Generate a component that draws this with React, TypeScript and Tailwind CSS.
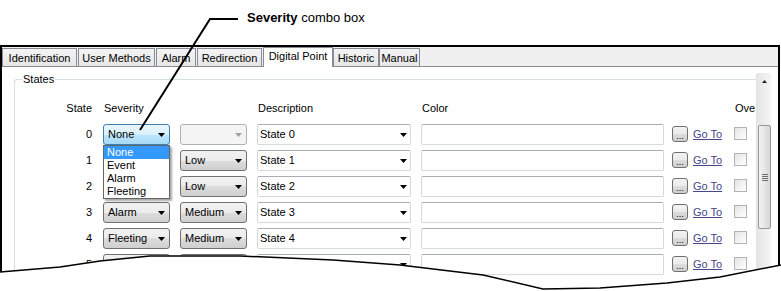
import React from "react";

type Kind = "normal" | "focus" | "disabled";

const tabs = [
  { label: "Identification", cls: "w-[75px]" },
  { label: "User Methods", cls: "ml-[1px] w-[77px]" },
  { label: "Alarm", cls: "ml-[1px] w-[40px]" },
  { label: "Redirection", cls: "ml-[1px] w-[65px]" },
  { label: "Digital Point", cls: "ml-[1px] w-[70px]", active: true },
  { label: "Historic", cls: "w-[46px]" },
  { label: "Manual", cls: "w-[41px]" },
];

// rows 1 and 2: severity hidden behind the open list
const rows = [
  { n: 0, sev: "None", sevKind: "focus" as Kind, lvl: "", lvlKind: "disabled" as Kind, desc: "State 0" },
  { n: 1, sev: "", sevKind: "normal" as Kind, lvl: "Low", lvlKind: "normal" as Kind, desc: "State 1" },
  { n: 2, sev: "", sevKind: "normal" as Kind, lvl: "Low", lvlKind: "normal" as Kind, desc: "State 2" },
  { n: 3, sev: "Alarm", sevKind: "normal" as Kind, lvl: "Medium", lvlKind: "normal" as Kind, desc: "State 3" },
  { n: 4, sev: "Fleeting", sevKind: "normal" as Kind, lvl: "Medium", lvlKind: "normal" as Kind, desc: "State 4" },
  { n: 5, sev: "Event", sevKind: "normal" as Kind, lvl: "Low", lvlKind: "normal" as Kind, desc: "State 5" },
];

const kindCls: Record<Kind, string> = {
  normal:
    "border-[#707070] bg-[linear-gradient(#f2f2f2_0%,#ebebeb_50%,#dddddd_50%,#cfcfcf_100%)]",
  focus:
    "border-[#3c7fb1] bg-[linear-gradient(#eaf6fd_0%,#d9f0fc_50%,#bee6fd_50%,#a7d9f5_100%)]",
  disabled: "border-[#adb2b5] bg-[#f4f4f4]",
};

const Arrow = ({ color = "#000" }: { color?: string }) => (
  <svg width="7" height="4" viewBox="0 0 7 4" className="shrink-0">
    <path d="M0 0h7L3.5 4z" fill={color} />
  </svg>
);

const DropList = ({ value, kind }: { value: string; kind: Kind }) => (
  <div
    className={`flex h-[21px] w-[67px] items-center justify-between rounded-[3px] border pl-[4px] pr-[4px] leading-[19px] ${kindCls[kind]}`}
  >
    <span>{value}</span>
    <Arrow color={kind === "disabled" ? "#a0a0a0" : "#000"} />
  </div>
);

const App = () => {
  return (
    <div className="relative h-[291px] w-[781px] overflow-hidden bg-white font-['Liberation_Sans',Arial,sans-serif] text-[11px] text-black">
      {/* callout */}
      <div className="h-[45px] pl-[247px] pt-[10px] text-[13px] leading-[16px]">
        <b>Severity</b> combo box
      </div>

      {/* window */}
      <div className="flex h-[246px] w-[780px] flex-col border-x-2 border-t-2 border-black bg-[#f0f0f0]">
        <div className="flex h-[19px] items-end">
          {tabs.map((t) =>
            t.active ? (
              <div
                key={t.label}
                className={`relative z-10 -mb-px h-[20px] border border-b-0 border-[#898c95] bg-white text-center leading-[17px] ${t.cls}`}
              >
                {t.label}
              </div>
            ) : (
              <div
                key={t.label}
                className={`h-[18px] border border-b-0 border-[#898c95] bg-[linear-gradient(#f4f4f4,#e6e6e6)] pt-[1px] text-center leading-[16px] ${t.cls}`}
              >
                {t.label}
              </div>
            )
          )}
        </div>

        <div className="flex flex-1 overflow-hidden border-t border-[#898c95] bg-white">
          {/* States group */}
          <div className="relative ml-[12px] mt-[12px] w-[742px] shrink-0 rounded-tl-[3px] border-l border-t border-[#d5dfe5]">
            <span className="absolute left-[7px] top-[-9px] z-10 bg-white px-[1px] leading-[16px]">States</span>
            <div className="overflow-hidden pt-[20px]">
              <div className="flex h-[16px] items-center whitespace-nowrap leading-[16px]">
                <div className="w-[77px] shrink-0 text-right">State</div>
                <div className="ml-[11px] w-[67px] shrink-0 pl-[1px]">Severity</div>
                <div className="ml-[10px] w-[67px] shrink-0" />
                <div className="ml-[10px] w-[154px] shrink-0 pl-[1px]">Description</div>
                <div className="ml-[10px] w-[243px] shrink-0 pl-[1px]">Color</div>
                <div className="ml-[8px] w-[16px] shrink-0" />
                <div className="ml-[5px] w-[31px] shrink-0" />
                <div className="ml-[11px] shrink-0">Ove</div>
              </div>

              <div className="mt-[8px]">
                {rows.map((r) => (
                  <div key={r.n} className="flex h-[26px] items-start whitespace-nowrap">
                    <div className="w-[77px] shrink-0 text-right leading-[20px]">{r.n}</div>
                    <div className="relative ml-[11px] shrink-0">
                      <DropList value={r.sev} kind={r.sevKind} />
                      {r.n === 0 && (
                        <div className="absolute left-0 top-[21px] z-20 w-[67px] border border-[#646464] bg-white leading-[13px] shadow-[2px_2px_2px_rgba(0,0,0,0.35)]">
                          <div className="bg-[#3399ff] pl-[3px] text-white">None</div>
                          <div className="pl-[3px]">Event</div>
                          <div className="pl-[3px]">Alarm</div>
                          <div className="pl-[3px]">Fleeting</div>
                        </div>
                      )}
                    </div>
                    <div className="ml-[10px] shrink-0">
                      <DropList value={r.lvl} kind={r.lvlKind} />
                    </div>
                    <div className="ml-[10px] flex h-[21px] w-[154px] shrink-0 items-center justify-between rounded-[2px] border border-[#d5d8de] border-t-[#abadb3] bg-white pl-[2px] pr-[3px] leading-[19px]">
                      <span>{r.desc}</span>
                      <Arrow />
                    </div>
                    <div className="ml-[10px] h-[21px] w-[243px] shrink-0 rounded-[2px] border border-[#d5d8de] border-t-[#abadb3] bg-white" />
                    <div className="ml-[8px] mt-[2px] flex h-[16px] w-[16px] shrink-0 items-end justify-center rounded-[3px] border border-[#707070] bg-[linear-gradient(#f2f2f2_0%,#ebebeb_50%,#dddddd_50%,#cfcfcf_100%)] pb-[2px] text-[9px] leading-[6px]">
                      ...
                    </div>
                    <div className="ml-[5px] w-[31px] shrink-0 leading-[20px] text-[#46468a] underline">Go To</div>
                    <div className="ml-[10px] mt-[3px] h-[13px] w-[13px] shrink-0 border border-[#b3b3b3] bg-[linear-gradient(135deg,#e4e4e4,#ffffff)]" />
                  </div>
                ))}
              </div>
            </div>
          </div>

          {/* scrollbar */}
          <div className="mt-[6px] flex w-[15px] shrink-0 flex-col rounded-t-[2px] border-l border-[#e2e2e2] bg-[linear-gradient(90deg,#e6e6e6,#f5f5f5)]">
            <div className="flex h-[17px] items-center justify-center">
              <svg width="5" height="3" viewBox="0 0 5 3">
                <path d="M0 3h5L2.5 0z" fill="#222" />
              </svg>
            </div>
            <div className="ml-[1px] mt-[35px] flex h-[104px] w-[13px] items-center justify-center rounded-[2px] border border-[#979797] bg-[linear-gradient(90deg,#f3f3f3,#e6e6e6_50%,#d6d6d6)]">
              <div className="flex flex-col gap-[1px]">
                <div className="h-px w-[6px] bg-[#6f6f6f]" />
                <div className="h-px w-[6px] bg-[#6f6f6f]" />
                <div className="h-px w-[6px] bg-[#6f6f6f]" />
                <div className="h-px w-[6px] bg-[#6f6f6f]" />
              </div>
            </div>
          </div>
        </div>
      </div>

      {/* pointer line + torn edge */}
      <svg className="pointer-events-none absolute left-0 top-0 z-30" width="781" height="291" viewBox="0 0 781 291">
        <path d="M238 19H210L140 130" fill="none" stroke="#000" strokeWidth="2" />
        <path
          d="M0 272L60 267L100 261L150 256L240 256L333 260L400 265L483 275L543 289L600 288L667 283L720 277L781 265V291H0Z"
          fill="#fff"
        />
        <path
          d="M0 272L60 267L100 261L150 256L240 256L333 260L400 265L483 275L543 289L600 288L667 283L720 277L781 265"
          fill="none"
          stroke="#000"
          strokeWidth="1.5"
        />
      </svg>
    </div>
  );
};

export default App;
